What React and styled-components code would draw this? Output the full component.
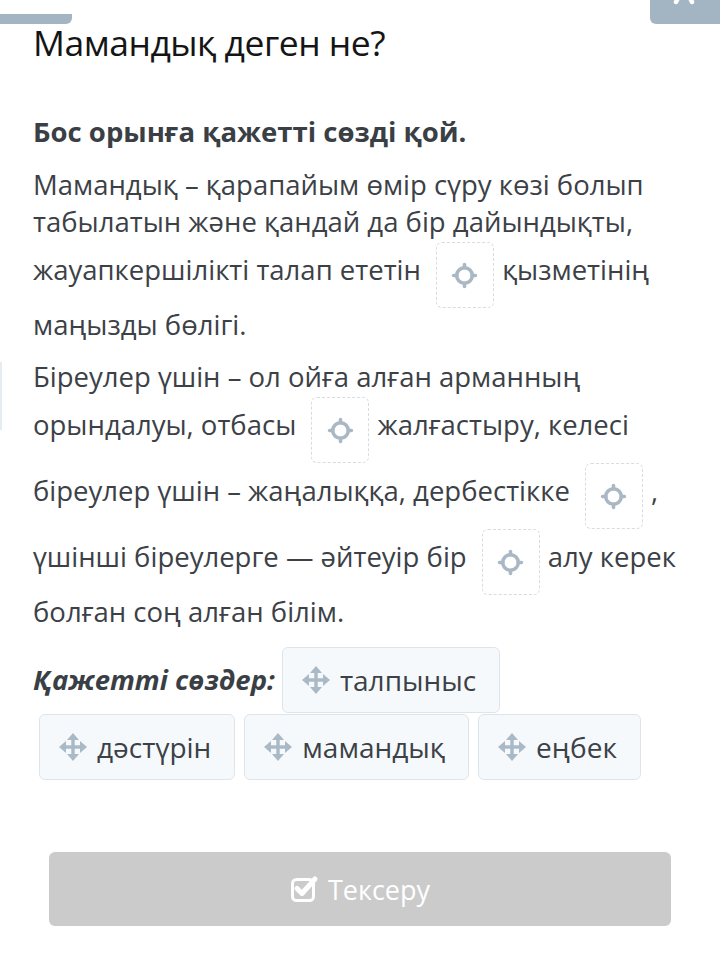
import React from "react";
import styled, { createGlobalStyle } from "styled-components";

const Global = createGlobalStyle`
  html, body {
    margin: 0;
    padding: 0;
    background: #fff;
  }
  body {
    font-family: "Open Sans", "Noto Sans", sans-serif;
  }
`;

const Page = styled.div`
  position: relative;
  width: 720px;
  height: 958px;
  overflow: hidden;
  background: #fff;
`;

const TopTab = styled.div`
  position: absolute;
  left: 0;
  top: 14px;
  width: 72px;
  height: 10px;
  background: #a3b5c3;
  border-bottom-right-radius: 6px;
`;

const TopCorner = styled.div`
  position: absolute;
  right: 0;
  top: 0;
  width: 70px;
  height: 24px;
  background: #a3b5c3;
  border-bottom-left-radius: 6px;
`;

const EdgeMark = styled.div`
  position: absolute;
  left: 0;
  top: 362px;
  width: 2px;
  height: 68px;
  background: #e6edf1;
`;

const Content = styled.div`
  padding: 21px 33px 0 33px;
`;

const Title = styled.h1`
  margin: 0;
  font-size: 35.5px;
  font-weight: 400;
  color: #151515;
  line-height: 42px;
  letter-spacing: -0.5px;
`;

const Instruction = styled.p`
  margin: 51px 0 0 0;
  font-size: 27.5px;
  font-weight: 700;
  color: #3a3f45;
  line-height: 36px;
`;

const Text = styled.p`
  margin: ${(p) => p.$top || 0}px 0 0 0;
  font-size: 27.5px;
  line-height: 37px;
  color: #3c4147;
`;

const Blank = styled.span`
  position: relative;
  top: 2px;
  display: inline-flex;
  align-items: center;
  justify-content: center;
  vertical-align: middle;
  box-sizing: border-box;
  width: 58px;
  height: 66px;
  margin: 0 1px 0 15px;
  border: 1px dashed #d6dce1;
  border-radius: 6px;
  background: #fff;
`;

const Words = styled.div`
  margin-top: 15px;
  line-height: 66px;
`;

const Label = styled.span`
  font-size: 27.5px;
  font-weight: 700;
  font-style: italic;
  color: #3a3f45;
  margin-right: 2px;
  vertical-align: middle;
`;

const Chip = styled.span`
  display: inline-flex;
  align-items: center;
  vertical-align: middle;
  box-sizing: border-box;
  height: 66px;
  margin: 0 4px 0 ${(p) => (p.$first ? 6 : 5)}px;
  padding: 0 23px 0 18px;
  gap: 9px;
  border: 1px solid #dde5eb;
  border-radius: 6px;
  background: #f5f9fc;
  font-size: 28px;
  color: #3c4147;
  line-height: 1;
`;

const ButtonRow = styled.div`
  padding: 72px 49px 0 49px;
`;

const CheckButton = styled.button`
  display: flex;
  align-items: center;
  justify-content: center;
  gap: 8px;
  width: 100%;
  height: 74px;
  border: none;
  border-radius: 6px;
  background: #cbcbcb;
  color: #fff;
  font-family: "Open Sans", "Noto Sans", sans-serif;
  font-size: 27px;
  cursor: default;
`;

const Crosshair = () => (
  <svg width="27" height="27" viewBox="0 0 26 26">
    <g stroke="#a9b8c4" strokeWidth="3.4" fill="none" strokeLinecap="round">
      <circle cx="13" cy="13" r="7.5" />
      <line x1="13" y1="2.5" x2="13" y2="5.5" />
      <line x1="13" y1="20.5" x2="13" y2="23.5" />
      <line x1="2.5" y1="13" x2="5.5" y2="13" />
      <line x1="20.5" y1="13" x2="23.5" y2="13" />
    </g>
  </svg>
);

const MoveIcon = () => (
  <svg width="30" height="30" viewBox="0 0 30 30">
    <g fill="#a9b9c6">
      <rect x="13.3" y="6" width="3.4" height="18" />
      <rect x="6" y="13.3" width="18" height="3.4" />
      <polygon points="15,1 21,8 9,8" />
      <polygon points="15,29 21,22 9,22" />
      <polygon points="1,15 8,9 8,21" />
      <polygon points="29,15 22,9 22,21" />
    </g>
  </svg>
);

const CheckSquare = () => (
  <svg width="30" height="30" viewBox="0 0 30 30">
    <rect x="2.5" y="5.5" width="21" height="21" rx="4" fill="none" stroke="#fff" strokeWidth="3" />
    <path d="M7 14.5 L12 19.5 L25 5" fill="none" stroke="#fff" strokeWidth="5" strokeLinecap="round" strokeLinejoin="round" />
  </svg>
);

const CloseMark = () => (
  <svg width="70" height="24" viewBox="0 0 70 24">
    <path d="M29 -4 L26 2 M39 -4 L42 2" stroke="#fff" strokeWidth="4.5" strokeLinecap="round" fill="none" />
  </svg>
);

const words = ["дәстүрін", "мамандық", "еңбек"];

export default function App() {
  return (
    <Page>
      <Global />
      <TopTab />
      <TopCorner>
        <CloseMark />
      </TopCorner>
      <EdgeMark />
      <Content>
        <Title>Мамандық деген не?</Title>
        <Instruction>Бос орынға қажетті сөзді қой.</Instruction>
        <Text $top={16}>
          Мамандық – қарапайым өмір сүру көзі болып табылатын және қандай да бір
          дайындықты, жауапкершілікті талап ететін
          <Blank>
            <Crosshair />
          </Blank>{" "}
          қызметінің маңызды бөлігі.
        </Text>
        <Text $top={15}>
          Біреулер үшін – ол ойға алған арманның орындалуы, отбасы
          <Blank>
            <Crosshair />
          </Blank>{" "}
          жалғастыру, келесі біреулер үшін – жаңалыққа, дербестікке
          <Blank>
            <Crosshair />
          </Blank>{" "}
          , үшінші біреулерге — әйтеуір бір
          <Blank>
            <Crosshair />
          </Blank>{" "}
          алу керек болған соң алған білім.
        </Text>
        <Words>
          <Label>Қажетті сөздер:</Label>
          <Chip>
            <MoveIcon />
            талпыныс
          </Chip>
          {words.map((w, i) => (
            <Chip key={w} $first={i === 0}>
              <MoveIcon />
              {w}
            </Chip>
          ))}
        </Words>
      </Content>
      <ButtonRow>
        <CheckButton>
          <CheckSquare />
          Тексеру
        </CheckButton>
      </ButtonRow>
    </Page>
  );
}
